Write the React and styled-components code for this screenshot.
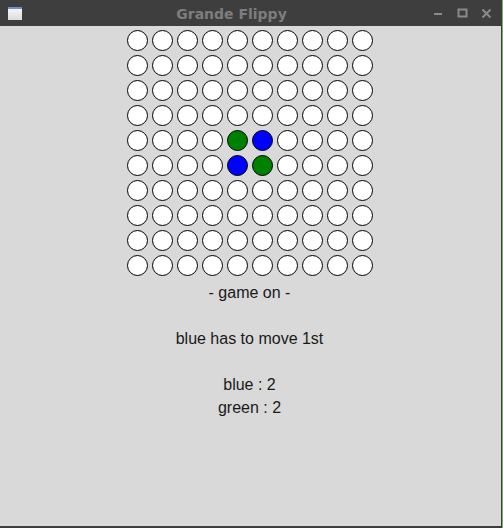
import React from 'react';
import styled, { createGlobalStyle } from 'styled-components';

const GlobalStyle = createGlobalStyle`
    html, body {
        margin: 0;
        padding: 0;
        background: #404040;
    }
`;

const Window = styled.div`
    width: 503px;
    height: 528px;
    display: flex;
    flex-direction: column;
    background: #3e3e3e;
    box-sizing: border-box;
    border-right: 1px solid #7fa57a;
`;

const TitleBar = styled.div`
    height: 26px;
    display: flex;
    align-items: center;
    padding: 0 10px 0 8px;
    background: #3e3e3e;
    flex-shrink: 0;
`;

const AppIcon = styled.div`
    width: 14px;
    height: 13px;
    background: linear-gradient(#f4f4f4, #dcdcdc);
    border-top: 2px solid #6b8fd1;
    box-sizing: border-box;
    margin-top: 1px;
`;

const Title = styled.div`
    flex: 1;
    text-align: center;
    font-family: "DejaVu Sans", sans-serif;
    font-weight: bold;
    font-size: 14px;
    color: #7d7d7d;
    padding-left: 8px;
    margin-top: 1px;
`;

const Controls = styled.div`
    display: flex;
    align-items: center;
    gap: 13px;
`;

const CtrlIcon = styled.svg`
    width: 11px;
    height: 11px;
    display: block;
`;

const Content = styled.div`
    flex: 1;
    background: #d9d9d9;
    margin-right: 1px;
    margin-bottom: 2px;
    display: flex;
    flex-direction: column;
    align-items: center;
    padding-top: 4px;
    padding-right: 2px;
`;

const Board = styled.div`
    display: grid;
    grid-template-columns: repeat(10, 21px);
    grid-auto-rows: 21px;
    gap: 4px;
`;

const Disc = styled.div`
    width: 21px;
    height: 21px;
    box-sizing: border-box;
    border-radius: 50%;
    border: 1px solid #000;
    background: ${p => p.$color};
`;

const Status = styled.div`
    margin-top: 5px;
    font-family: "Liberation Sans", Arial, sans-serif;
    font-size: 16px;
    line-height: 23px;
    color: #1a1a1a;
    text-align: center;
`;

const Line = styled.div`
    min-height: 23px;
`;

const COLORS = { e: '#ffffff', b: '#0000ff', g: '#008000' };

const cellAt = (r, c) => {
    if (r === 4 && c === 4) return 'g';
    if (r === 4 && c === 5) return 'b';
    if (r === 5 && c === 4) return 'b';
    if (r === 5 && c === 5) return 'g';
    return 'e';
};

const App = () => {
    const cells = [];
    for (let r = 0; r < 10; r++) {
        for (let c = 0; c < 10; c++) {
            cells.push(<Disc key={`${r}-${c}`} $color={COLORS[cellAt(r, c)]} />);
        }
    }

    return (
        <>
            <GlobalStyle />
            <Window>
                <TitleBar>
                    <AppIcon />
                    <Title>Grande Flippy</Title>
                    <Controls>
                        <CtrlIcon viewBox="0 0 11 11">
                            <rect x="1" y="5" width="8" height="2" fill="#8a8a8a" />
                        </CtrlIcon>
                        <CtrlIcon viewBox="0 0 11 11">
                            <rect x="1.5" y="1.5" width="8" height="7" fill="none" stroke="#8a8a8a" strokeWidth="2" />
                        </CtrlIcon>
                        <CtrlIcon viewBox="0 0 11 11">
                            <path d="M1.5 1.5 L9.5 9.5 M9.5 1.5 L1.5 9.5" stroke="#8a8a8a" strokeWidth="2" />
                        </CtrlIcon>
                    </Controls>
                </TitleBar>
                <Content>
                    <Board>{cells}</Board>
                    <Status>
                        <Line>- game on -</Line>
                        <Line />
                        <Line>blue has to move 1st</Line>
                        <Line />
                        <Line>blue : 2</Line>
                        <Line>green : 2</Line>
                    </Status>
                </Content>
            </Window>
        </>
    );
};

export default App;
